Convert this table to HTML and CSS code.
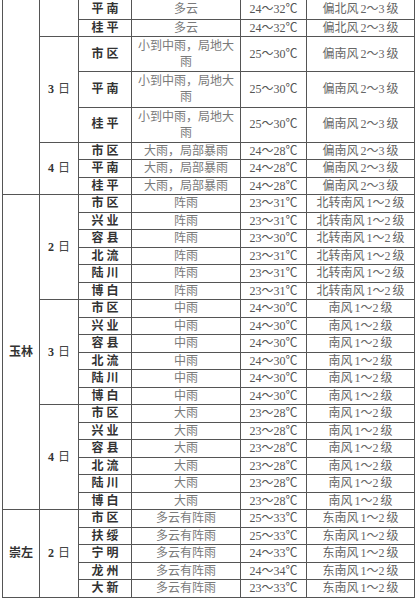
FILE: index.html
```html
<!DOCTYPE html>
<html lang="zh">
<head>
<meta charset="utf-8">
<title>天气预报</title>
<link rel="stylesheet" href="styles.css">
</head>
<body>
<table class="wt">
<colgroup><col class="c1"><col class="c2"><col class="c3"><col class="c4"><col class="c5"><col class="c6"></colgroup>
<tbody>
<tr class="r1"><td rowspan="8" class="city"></td><td rowspan="2" class="day"></td><td class="loc">平南</td><td class="wx">多云</td><td class="tmp">24～32℃</td><td class="wind">偏北风<span class="n">2～3</span>级</td></tr>
<tr class="r2"><td class="loc">桂平</td><td class="wx">多云</td><td class="tmp">24～32℃</td><td class="wind">偏北风<span class="n">2～3</span>级</td></tr>
<tr class="tall"><td rowspan="3" class="day">3<span class="d">日</span></td><td class="loc">市区</td><td class="wx wrap">小到中雨，局地大雨</td><td class="tmp">25～30℃</td><td class="wind">偏南风<span class="n">2～3</span>级</td></tr>
<tr class="tall"><td class="loc">平南</td><td class="wx wrap">小到中雨，局地大雨</td><td class="tmp">25～30℃</td><td class="wind">偏南风<span class="n">2～3</span>级</td></tr>
<tr class="tall"><td class="loc">桂平</td><td class="wx wrap">小到中雨，局地大雨</td><td class="tmp">25～30℃</td><td class="wind">偏南风<span class="n">2～3</span>级</td></tr>
<tr><td rowspan="3" class="day">4<span class="d">日</span></td><td class="loc">市区</td><td class="wx">大雨，局部暴雨</td><td class="tmp">24～28℃</td><td class="wind">偏南风<span class="n">2～3</span>级</td></tr>
<tr><td class="loc">平南</td><td class="wx">大雨，局部暴雨</td><td class="tmp">24～28℃</td><td class="wind">偏南风<span class="n">2～3</span>级</td></tr>
<tr><td class="loc">桂平</td><td class="wx">大雨，局部暴雨</td><td class="tmp">24～28℃</td><td class="wind">偏南风<span class="n">2～3</span>级</td></tr>

<tr><td rowspan="18" class="city">玉林</td><td rowspan="6" class="day">2<span class="d">日</span></td><td class="loc">市区</td><td class="wx">阵雨</td><td class="tmp">23～31℃</td><td class="wind">北转南风<span class="n">1～2</span>级</td></tr>
<tr><td class="loc">兴业</td><td class="wx">阵雨</td><td class="tmp">23～31℃</td><td class="wind">北转南风<span class="n">1～2</span>级</td></tr>
<tr><td class="loc">容县</td><td class="wx">阵雨</td><td class="tmp">23～30℃</td><td class="wind">北转南风<span class="n">1～2</span>级</td></tr>
<tr><td class="loc">北流</td><td class="wx">阵雨</td><td class="tmp">23～31℃</td><td class="wind">北转南风<span class="n">1～2</span>级</td></tr>
<tr><td class="loc">陆川</td><td class="wx">阵雨</td><td class="tmp">23～31℃</td><td class="wind">北转南风<span class="n">1～2</span>级</td></tr>
<tr><td class="loc">博白</td><td class="wx">阵雨</td><td class="tmp">23～31℃</td><td class="wind">北转南风<span class="n">1～2</span>级</td></tr>

<tr><td rowspan="6" class="day">3<span class="d">日</span></td><td class="loc">市区</td><td class="wx">中雨</td><td class="tmp">24～30℃</td><td class="wind">南风<span class="n">1～2</span>级</td></tr>
<tr><td class="loc">兴业</td><td class="wx">中雨</td><td class="tmp">24～30℃</td><td class="wind">南风<span class="n">1～2</span>级</td></tr>
<tr><td class="loc">容县</td><td class="wx">中雨</td><td class="tmp">24～30℃</td><td class="wind">南风<span class="n">1～2</span>级</td></tr>
<tr><td class="loc">北流</td><td class="wx">中雨</td><td class="tmp">24～30℃</td><td class="wind">南风<span class="n">1～2</span>级</td></tr>
<tr><td class="loc">陆川</td><td class="wx">中雨</td><td class="tmp">24～30℃</td><td class="wind">南风<span class="n">1～2</span>级</td></tr>
<tr><td class="loc">博白</td><td class="wx">中雨</td><td class="tmp">24～30℃</td><td class="wind">南风<span class="n">1～2</span>级</td></tr>

<tr><td rowspan="6" class="day">4<span class="d">日</span></td><td class="loc">市区</td><td class="wx">大雨</td><td class="tmp">23～28℃</td><td class="wind">南风<span class="n">1～2</span>级</td></tr>
<tr><td class="loc">兴业</td><td class="wx">大雨</td><td class="tmp">23～28℃</td><td class="wind">南风<span class="n">1～2</span>级</td></tr>
<tr><td class="loc">容县</td><td class="wx">大雨</td><td class="tmp">23～28℃</td><td class="wind">南风<span class="n">1～2</span>级</td></tr>
<tr><td class="loc">北流</td><td class="wx">大雨</td><td class="tmp">23～28℃</td><td class="wind">南风<span class="n">1～2</span>级</td></tr>
<tr><td class="loc">陆川</td><td class="wx">大雨</td><td class="tmp">23～28℃</td><td class="wind">南风<span class="n">1～2</span>级</td></tr>
<tr><td class="loc">博白</td><td class="wx">大雨</td><td class="tmp">23～28℃</td><td class="wind">南风<span class="n">1～2</span>级</td></tr>

<tr><td rowspan="5" class="city">崇左</td><td rowspan="5" class="day">2<span class="d">日</span></td><td class="loc">市区</td><td class="wx">多云有阵雨</td><td class="tmp">25～33℃</td><td class="wind">东南风<span class="n">1～2</span>级</td></tr>
<tr><td class="loc">扶绥</td><td class="wx">多云有阵雨</td><td class="tmp">25～33℃</td><td class="wind">东南风<span class="n">1～2</span>级</td></tr>
<tr><td class="loc">宁明</td><td class="wx">多云有阵雨</td><td class="tmp">24～33℃</td><td class="wind">东南风<span class="n">1～2</span>级</td></tr>
<tr><td class="loc">龙州</td><td class="wx">多云有阵雨</td><td class="tmp">24～34℃</td><td class="wind">东南风<span class="n">1～2</span>级</td></tr>
<tr><td class="loc">大新</td><td class="wx">多云有阵雨</td><td class="tmp">23～33℃</td><td class="wind">东南风<span class="n">1～2</span>级</td></tr>
</tbody>
</table>
</body>
</html>
```
FILE: styles.css
```css
html, body {
  margin: 0;
  padding: 0;
  background: #fff;
}
body {
  font-family: "Liberation Serif", "Noto Sans CJK SC", serif;
  font-size: 12px;
}
.wt {
  border-collapse: collapse;
  table-layout: fixed;
  width: 412px;
  margin: -1px 0 0 2px;
}
.c1 { width: 37px; }
.c2 { width: 39px; }
.c3 { width: 53px; }
.c4 { width: 109px; }
.c5 { width: 66px; }
.c6 { width: 108px; }
.wt td {
  box-sizing: border-box;
  border: 1px solid #555;
  padding: 0 4px;
  height: 17.5px;
  line-height: 15px;
  text-align: center;
  vertical-align: middle;
  white-space: nowrap;
  overflow: hidden;
}
.wt .r1 td { height: 20px; }
.wt .r2 td { height: 17px; }
.wt .tall td { height: 35.33px; }
.wt td.wrap { white-space: normal; line-height: 16px; }
.city, .day {
  font-weight: bold;
  color: #333;
}
.day .d { margin-left: 4px; font-weight: normal; color: #444; }
.wt td.loc {
  font-weight: bold;
  color: #333;
  letter-spacing: 3px;
  padding: 0 1px 0 4px;
}
.wx { color: #7a7a7a; }
.tmp { color: #555; }
.wind { color: #666; }
.n { margin: 0 2px; }
```
